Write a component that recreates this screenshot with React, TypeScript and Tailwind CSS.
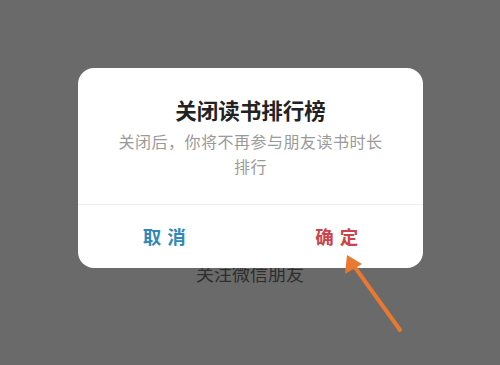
export default function App() {
  const font = { fontFamily: '"Noto Sans CJK SC", "Noto Sans", sans-serif' };
  return (
    <div className="relative w-[500px] h-[365px] overflow-hidden bg-[#6a6a6a]" style={font}>
      <div className="flex flex-col items-center pt-[260px]">
        <div className="text-[18px] leading-[26px] text-[#2e2e2e]">关注微信朋友</div>
      </div>

      <div className="absolute left-[78px] top-[68px] w-[345px] h-[200px] rounded-[16px] bg-white flex flex-col">
        <div className="flex flex-col items-center px-[37px] pt-[28px] h-[136px]">
          <div className="text-[21.5px] leading-[28px] font-bold text-[#222222]">关闭读书排行榜</div>
          <div className="mt-[5px] text-[16px] leading-[25px] tracking-[0.5px] text-[#9a9a9a] text-center">
            关闭后，你将不再参与朋友读书时长排行
          </div>
        </div>
        <div className="h-px bg-[#efefef]" />
        <div className="flex flex-1">
          <div className="flex-1 flex items-center justify-center gap-[6px] text-[18.5px] font-bold text-[#3187ba]">
            <span>取</span>
            <span>消</span>
          </div>
          <div className="flex-1 flex items-center justify-center gap-[6px] text-[18.5px] font-bold text-[#cc444a]">
            <span>确</span>
            <span>定</span>
          </div>
        </div>
      </div>

      <svg className="absolute left-0 top-0" width="500" height="365" viewBox="0 0 500 365">
        <line x1="400" y1="330" x2="354" y2="266" stroke="#e8792f" strokeWidth="4" strokeLinecap="round" />
        <polygon points="347,255 345,274 362,264" fill="#e8792f" />
      </svg>
    </div>
  );
}
